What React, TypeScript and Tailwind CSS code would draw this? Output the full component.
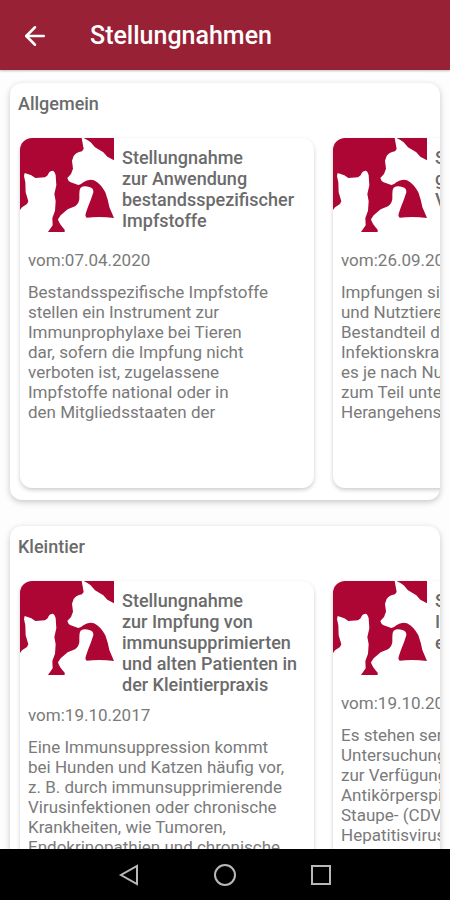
import { ArrowLeft } from 'lucide-react'

type Statement = {
  title: string
  date: string
  text: string
}

type Section = {
  name: string
  statements: Statement[]
}

const sections: Section[] = [
  {
    name: 'Allgemein',
    statements: [
      {
        title: 'Stellungnahme\nzur Anwendung\nbestandsspezifischer\nImpfstoffe',
        date: '07.04.2020',
        text: 'Bestandsspezifische Impfstoffe\nstellen ein Instrument zur\nImmunprophylaxe bei Tieren\ndar, sofern die Impfung nicht\nverboten ist, zugelassene\nImpfstoffe national oder in\nden Mitgliedsstaaten der',
      },
      {
        title: 'Stellungnahme\ngegen\nVorbehalte',
        date: '26.09.2018',
        text: 'Impfungen sind bei Haus-\nund Nutztieren ein\nBestandteil der\nInfektionskrankheiten\nes je nach Nutzung\nzum Teil unterschiedliche\nHerangehensweisen',
      },
    ],
  },
  {
    name: 'Kleintier',
    statements: [
      {
        title:
          'Stellungnahme\nzur Impfung von\nimmunsupprimierten\nund alten Patienten in\nder Kleintierpraxis',
        date: '19.10.2017',
        text: 'Eine Immunsuppression kommt\nbei Hunden und Katzen häufig vor,\nz. B. durch immunsupprimierende\nVirusinfektionen oder chronische\nKrankheiten, wie Tumoren,\nEndokrinopathien und chronische',
      },
      {
        title: 'Stellungnahme\nImpfung\neines',
        date: '19.10.2017',
        text: 'Es stehen serologische\nUntersuchungen\nzur Verfügung, um\nAntikörperspiegel\nStaupe- (CDV),\nHepatitisvirus',
      },
    ],
  },
]

function AnimalsLogo() {
  return (
    <svg
      viewBox="0 0 282 282"
      className="size-[94px] shrink-0 fill-[#ad0634]"
      aria-hidden="true"
    >
      <path d="M0 0H185L191 33L186 40Q167 44 161 54L156 68L159 92L153 108L142 120Q144 129 152 133L175 141Q182 141 190 133Q205 122 222 127Q242 137 256 163Q264 185 268 207L282 240Q240 234 200 239Q194 235 197 227L203 209L213 184L220 163Q221 150 208 147Q192 142 182 149Q177 155 178 168V184Q175 199 165 205L143 214L122 232L114 244Q116 256 134 275V282H84L98 262L97 240L105 218L107 190L103 168L109 142L107 112Q104 98 97 98Q87 99 83 112L75 118L46 120L34 112L14 105L12 114L16 133L17 163L25 190L21 198L6 208L0 216Z" />
      <path d="M191 0H282V67L262 56L250 43L225 28L212 13Q203 5 191 0Z" />
    </svg>
  )
}

function StatementCard({ title, date, text }: Statement) {
  return (
    <article className="h-[350px] w-[294px] shrink-0 overflow-hidden rounded-xl bg-white shadow-[0_2px_4px_rgba(0,0,0,0.2)]">
      <div className="flex min-h-[112px] gap-2">
        <AnimalsLogo />
        <h3 className="pt-[9px] pb-2.5 text-[18px] leading-[21px] font-medium whitespace-pre">
          {title}
        </h3>
      </div>
      <div className="px-2 text-[17px] leading-5 text-[#7a7a7a]">
        <p>vom:{date}</p>
        <p className="mt-3 whitespace-pre">{text}</p>
      </div>
    </article>
  )
}

function StatementSection({ name, statements }: Section) {
  return (
    <section className="overflow-hidden rounded-xl bg-white shadow-[0_2px_6px_rgba(0,0,0,0.22)]">
      <h2 className="px-2 pt-2.5 text-[18px] leading-[21px] font-medium">{name}</h2>
      <div className="flex gap-[19px] overflow-x-auto px-2.5 pt-6 pb-3 [scrollbar-width:none]">
        {statements.map((statement) => (
          <StatementCard key={statement.text} {...statement} />
        ))}
      </div>
    </section>
  )
}

export default function App() {
  return (
    <div className="flex h-dvh flex-col bg-[#fdfdfd] font-[Roboto,sans-serif] text-[#6b6b6b]">
      <header className="z-10 flex h-[70px] shrink-0 items-center gap-10 bg-[#992135] px-5 pt-0.5 text-white shadow-[0_1px_2px_rgba(0,0,0,0.25)]">
        <button type="button" aria-label="Zurück">
          <ArrowLeft className="size-[30px]" strokeWidth={2} />
        </button>
        <h1 className="text-[25px] leading-8 font-medium">Stellungnahmen</h1>
      </header>

      <main className="flex min-h-0 flex-1 flex-col gap-[26px] overflow-y-auto px-2.5 pt-[13px] [scrollbar-width:none] *:shrink-0">
        {sections.map((section) => (
          <StatementSection key={section.name} {...section} />
        ))}
      </main>

      <nav className="flex h-[51px] shrink-0 items-center justify-center gap-[68px] bg-black">
        <button type="button" aria-label="Zurück">
          <svg viewBox="0 0 28 28" className="size-7 fill-none stroke-[#b8b8b8] stroke-2">
            <path d="M22 5V23L6 14Z" />
          </svg>
        </button>
        <button type="button" aria-label="Startseite">
          <svg viewBox="0 0 28 28" className="size-7 fill-none stroke-[#b8b8b8] stroke-2">
            <circle cx="14" cy="14" r="10" />
          </svg>
        </button>
        <button type="button" aria-label="Übersicht">
          <svg viewBox="0 0 28 28" className="size-7 fill-none stroke-[#b8b8b8] stroke-2">
            <rect x="5" y="5" width="18" height="18" />
          </svg>
        </button>
      </nav>
    </div>
  )
}
